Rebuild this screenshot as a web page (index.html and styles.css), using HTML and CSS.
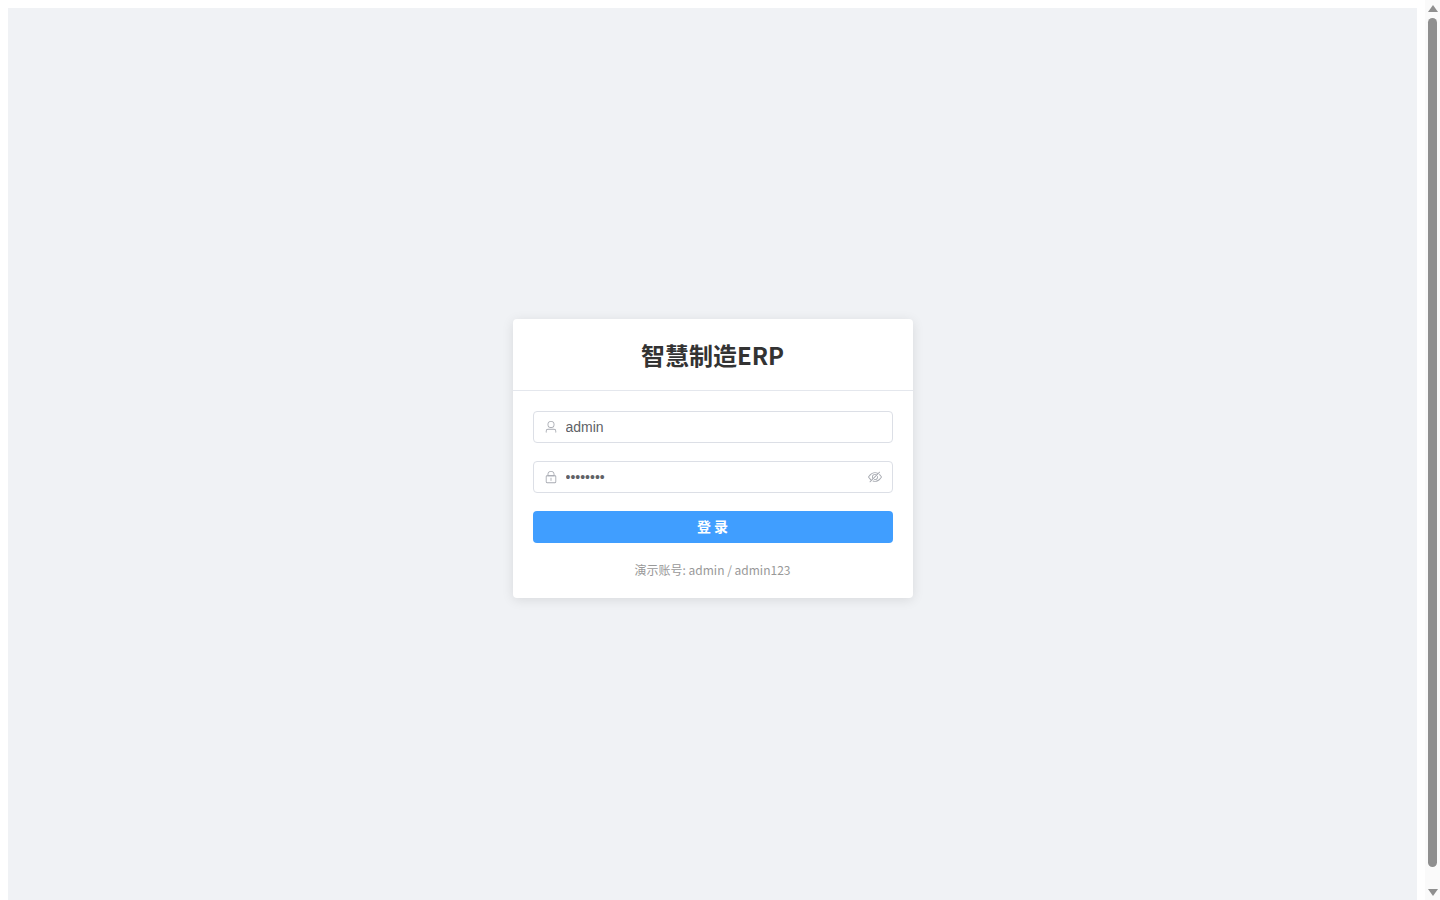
FILE: index.html
```html
<!DOCTYPE html>
<html lang="zh-CN">
<head>
    <meta charset="UTF-8">
    <meta name="viewport" content="width=device-width, initial-scale=1.0">
    <title>智慧制造ERP</title>
    <link rel="stylesheet" href="styles.css">
</head>
<body>
    <div class="login-container">
        <div class="login-card">
            <div class="card-header">
                <h2>智慧制造ERP</h2>
            </div>
            <form class="card-body">
                <div class="input-wrap">
                    <svg class="input-icon" viewBox="0 0 1024 1024"><path fill="currentColor" d="M512 512a192 192 0 1 0 0-384 192 192 0 0 0 0 384zm0 64a256 256 0 1 1 0-512 256 256 0 0 1 0 512zm320 320v-96a96 96 0 0 0-96-96H288a96 96 0 0 0-96 96v96a32 32 0 1 1-64 0v-96a160 160 0 0 1 160-160h448a160 160 0 0 1 160 160v96a32 32 0 1 1-64 0z"/></svg>
                    <input class="input-text" type="text" value="admin">
                </div>
                <div class="input-wrap">
                    <svg class="input-icon" viewBox="0 0 1024 1024"><path fill="currentColor" d="M224 448a32 32 0 0 0-32 32v384a32 32 0 0 0 32 32h576a32 32 0 0 0 32-32V480a32 32 0 0 0-32-32H224zm0-64h576a96 96 0 0 1 96 96v384a96 96 0 0 1-96 96H224a96 96 0 0 1-96-96V480a96 96 0 0 1 96-96z"/><path fill="currentColor" d="M512 544a32 32 0 0 1 32 32v192a32 32 0 1 1-64 0V576a32 32 0 0 1 32-32zm192-160v-64a192 192 0 1 0-384 0v64h384zM512 64a256 256 0 0 1 256 256v128H256V320A256 256 0 0 1 512 64z"/></svg>
                    <input class="input-text" type="password" value="admin123">
                    <svg class="input-icon eye-icon" viewBox="0 0 1024 1024"><path fill="currentColor" d="M876.8 156.8c0-9.6-3.2-16-9.6-22.4-6.4-6.4-12.8-9.6-22.4-9.6-9.6 0-16 3.2-22.4 9.6L736 220.8c-64-32-137.6-51.2-224-60.8-160 16-288 73.6-377.6 176C44.8 438.4 0 496 0 512s48 73.6 134.4 176c22.4 25.6 44.8 48 73.6 67.2l-86.4 89.6c-6.4 6.4-9.6 12.8-9.6 22.4 0 9.6 3.2 16 9.6 22.4 6.4 6.4 12.8 9.6 22.4 9.6 9.6 0 16-3.2 22.4-9.6l704-710.4c3.2-6.4 6.4-12.8 6.4-22.4Zm-646.4 528c-76.8-70.4-128-128-153.6-172.8 28.8-48 80-105.6 153.6-172.8C304 272 400 230.4 512 224c64 3.2 124.8 19.2 176 44.8l-54.4 54.4C598.4 300.8 560 288 512 288c-64 0-115.2 22.4-160 64s-64 96-64 160c0 48 12.8 89.6 35.2 124.8L256 707.2c-9.6-6.4-19.2-16-25.6-22.4Zm140.8-96c-12.8-22.4-19.2-48-19.2-76.8 0-44.8 16-83.2 48-112 32-28.8 67.2-48 112-48 28.8 0 54.4 6.4 73.6 19.2L371.2 588.8ZM889.599 336c-12.8-16-28.8-28.8-41.6-41.6l-48 48c73.6 67.2 124.8 124.8 150.4 169.6-28.8 48-80 105.6-153.6 172.8-73.6 67.2-172.8 108.8-284.8 115.2-51.2-3.2-99.2-12.8-140.8-28.8l-48 48c57.6 22.4 118.4 38.4 188.8 44.8 160-16 288-73.6 377.6-176C979.199 585.6 1024 528 1024 512s-48.001-73.6-134.401-176Z"/><path fill="currentColor" d="M511.998 672c-12.8 0-25.6-3.2-38.4-6.4l-51.2 51.2c28.8 12.8 57.6 19.2 89.6 19.2 64 0 115.2-22.4 160-64 41.6-41.6 64-96 64-160 0-32-6.4-64-19.2-89.6l-51.2 51.2c3.2 12.8 6.4 25.6 6.4 38.4 0 44.8-16 83.2-48 112-32 28.8-67.2 48-112 48Z"/></svg>
                </div>
                <button class="login-btn" type="button">登 录</button>
                <div class="login-hint">演示账号: admin / admin123</div>
            </form>
        </div>
    </div>
    <div class="scrollbar">
        <span class="scroll-arrow arrow-up"></span>
        <span class="scroll-thumb"></span>
        <span class="scroll-arrow arrow-down"></span>
    </div>
</body>
</html>
```

FILE: styles.css
```css
html {
    overflow: hidden;
}
body {
    margin: 8px 23px 8px 8px;
    font-family: "Noto Sans CJK SC", sans-serif;
    color: #303133;
}
.login-container {
    height: 100vh;
    background: #f0f2f5;
    display: flex;
    align-items: center;
    justify-content: center;
}
.login-card {
    width: 400px;
    background: #fff;
    border-radius: 4px;
    box-shadow: 0 2px 12px rgba(0, 0, 0, 0.1);
}
.card-header {
    padding: 18px 20px;
    border-bottom: 1px solid #e4e7ed;
    text-align: center;
}
.card-header h2 {
    margin: 0;
    font-size: 24px;
    font-weight: 700;
    color: #333;
}
.card-body {
    padding: 20px;
}
.input-wrap {
    display: flex;
    align-items: center;
    height: 32px;
    box-sizing: border-box;
    padding: 0 10px;
    margin-bottom: 18px;
    border: 1px solid #dcdfe6;
    border-radius: 4px;
    background: #fff;
}
.input-icon {
    width: 14px;
    height: 14px;
    flex: none;
    color: #a8abb2;
    margin-right: 8px;
}
.eye-icon {
    margin-right: 0;
    margin-left: 8px;
}
.input-text {
    flex: 1;
    min-width: 0;
    height: 30px;
    padding: 0;
    border: none;
    outline: none;
    background: none;
    font-family: "Liberation Sans", sans-serif;
    font-size: 14px;
    color: #606266;
}
.login-btn {
    display: block;
    width: 100%;
    height: 32px;
    padding: 0 0 2px;
    border: none;
    border-radius: 4px;
    background: #409eff;
    color: #fff;
    font-family: inherit;
    font-size: 14px;
    font-weight: 700;
    cursor: pointer;
}
.login-hint {
    margin-top: 18px;
    text-align: center;
    font-size: 12px;
    color: #999;
}
/* window scrollbar, headless chrome doesn't paint one */
.scrollbar {
    position: fixed;
    top: 0;
    right: 0;
    bottom: 0;
    width: 15px;
    background: #fafafa;
    display: flex;
    flex-direction: column;
    align-items: center;
}
.scroll-arrow {
    flex: none;
    width: 0;
    height: 0;
    border-left: 5px solid transparent;
    border-right: 5px solid transparent;
}
.arrow-up {
    margin-top: 5px;
    border-bottom: 7px solid #8f8f8f;
}
.arrow-down {
    margin-top: 22px;
    border-top: 7px solid #8f8f8f;
}
.scroll-thumb {
    flex: none;
    width: 9px;
    height: 849px;
    margin-top: 6px;
    border-radius: 5px;
    background: #8f8f8f;
}
```
